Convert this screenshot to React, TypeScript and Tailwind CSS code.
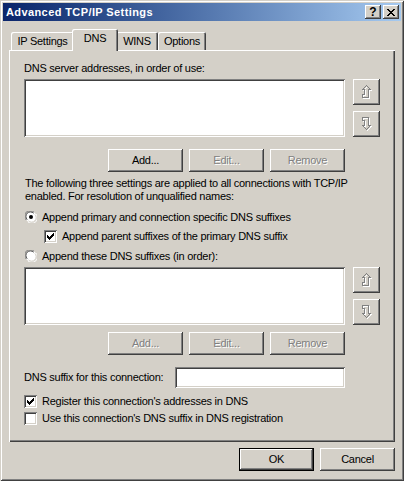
import type { ReactNode } from 'react'

const FONT = "font-['Liberation_Sans',Arial,sans-serif]"

function Btn({ label, disabled, isDefault, w = 'w-[75px]' }: { label: string; disabled?: boolean; isDefault?: boolean; w?: string }) {
  return (
    <div
      className={`${w} h-[23px] flex items-center justify-center bg-[#d4d0c8] ${
        isDefault
          ? 'shadow-[inset_0_0_0_1px_#000,inset_-2px_-2px_0_#404040,inset_2px_2px_0_#fff,inset_-3px_-3px_0_#808080]'
          : 'shadow-[inset_-1px_-1px_0_#404040,inset_1px_1px_0_#fff,inset_-2px_-2px_0_#808080,inset_2px_2px_0_#d4d0c8]'
      } ${disabled ? 'text-[#808080] [text-shadow:1px_1px_0_#fff]' : 'text-black'}`}
    >
      {label}
    </div>
  )
}

function ArrowBtn({ down }: { down?: boolean }) {
  const up = '5.5,0.5 9.5,4.5 7.5,4.5 7.5,12.5 1.5,12.5 1.5,9.5 3.5,9.5 3.5,4.5 1.5,4.5'
  const dn = '1.5,0.5 7.5,0.5 7.5,8.5 9.5,8.5 5.5,12.5 1.5,8.5 3.5,8.5 3.5,3.5 1.5,3.5'
  const pts = down ? dn : up
  return (
    <div className="w-[27px] h-[26px] flex items-center justify-center bg-[#d4d0c8] shadow-[inset_-1px_-1px_0_#404040,inset_1px_1px_0_#fff,inset_-2px_-2px_0_#808080,inset_2px_2px_0_#d4d0c8]">
      <svg width="12" height="14" viewBox="0 0 12 14" shapeRendering="crispEdges">
        <polygon points={pts} transform="translate(1,1)" fill="none" stroke="#fff" strokeWidth="1" />
        <polygon points={pts} fill="none" stroke="#808080" strokeWidth="1" />
      </svg>
    </div>
  )
}

function ListBox() {
  return (
    <div className="flex gap-[8px]">
      <div className="w-[321px] h-[58px] bg-white shadow-[inset_1px_1px_0_#808080,inset_-1px_-1px_0_#fff,inset_2px_2px_0_#404040,inset_-2px_-2px_0_#d4d0c8]" />
      <div className="flex flex-col gap-[6px]">
        <ArrowBtn />
        <ArrowBtn down />
      </div>
    </div>
  )
}

function Check({ checked }: { checked?: boolean }) {
  return (
    <div className="w-[13px] h-[13px] shrink-0 bg-white flex items-center justify-center shadow-[inset_1px_1px_0_#808080,inset_-1px_-1px_0_#fff,inset_2px_2px_0_#404040,inset_-2px_-2px_0_#d4d0c8]">
      {checked && (
        <svg width="7" height="7" viewBox="0 0 7 7" shapeRendering="crispEdges">
          <path d="M6 0h1v3h-1v1h-1v1h-1v1h-1v1h-1v-1h-1v-1h-1v-3h1v1h1v1h1v-1h1v-1h1z" fill="#000" />
        </svg>
      )}
    </div>
  )
}

function Radio({ checked }: { checked?: boolean }) {
  return (
    <svg width="12" height="12" viewBox="0 0 12 12" className="shrink-0">
      <circle cx="6" cy="6" r="5.5" fill="#fff" />
      <path d="M1.2 9 A5.3 5.3 0 0 1 9 1.2" fill="none" stroke="#808080" strokeWidth="1" />
      <path d="M2.2 8.6 A4.3 4.3 0 0 1 8.6 2.2" fill="none" stroke="#404040" strokeWidth="1" />
      <path d="M10.8 3 A5.3 5.3 0 0 1 3 10.8" fill="none" stroke="#fff" strokeWidth="1" />
      <path d="M9.8 3.4 A4.3 4.3 0 0 1 3.4 9.8" fill="none" stroke="#d4d0c8" strokeWidth="1" />
      {checked && <circle cx="6" cy="6" r="2" fill="#000" />}
    </svg>
  )
}

function Row({ children, className = '' }: { children: ReactNode; className?: string }) {
  return <div className={`h-[16px] flex items-center gap-[5px] ${className}`}>{children}</div>
}

export default function App() {
  return (
    <div className={`w-[404px] h-[481px] bg-[#d4d0c8] p-[3px] flex flex-col text-[11px] leading-[13px] tracking-[-0.25px] text-black ${FONT} shadow-[inset_1px_1px_0_#d4d0c8,inset_-1px_-1px_0_#404040,inset_2px_2px_0_#fff,inset_-2px_-2px_0_#808080]`}>
      <div className="h-[18px] flex items-center bg-linear-to-r from-[#0a246a] to-[#a6caf0] pl-[3px] pr-[2px]">
        <span className="flex-1 text-white font-bold text-[11px] tracking-[0.4px]">Advanced TCP/IP Settings</span>
        <div className="w-[16px] h-[14px] flex items-center justify-center bg-[#d4d0c8] font-bold text-[12px] tracking-normal shadow-[inset_-1px_-1px_0_#404040,inset_1px_1px_0_#fff,inset_-2px_-2px_0_#808080,inset_2px_2px_0_#d4d0c8]">
          ?
        </div>
        <div className="ml-[2px] w-[16px] h-[14px] flex items-center justify-center bg-[#d4d0c8] shadow-[inset_-1px_-1px_0_#404040,inset_1px_1px_0_#fff,inset_-2px_-2px_0_#808080,inset_2px_2px_0_#d4d0c8]">
          <svg width="8" height="7" viewBox="0 0 8 7" shapeRendering="crispEdges">
            <path d="M0 0h2v1h1v1h2v-1h1v-1h2v1h-1v1h-1v1h-1v1h1v1h1v1h1v1h-2v-1h-1v-1h-2v1h-1v1h-2v-1h1v-1h1v-1h1v-1h-1v-1h-1v-1h-1z" fill="#000" />
          </svg>
        </div>
      </div>

      <div className="flex-1 flex flex-col px-[6px] pt-[8px]">
        <div className="flex items-end h-[21px] pl-[2px]">
          <div className="w-[63px] h-[18px] flex items-center justify-center rounded-t-[2px] shadow-[inset_1px_1px_0_#fff,inset_-1px_0_0_#404040,inset_-2px_0_0_#808080]">
            IP Settings
          </div>
          <div className="relative z-10 -mx-[2px] mb-[-1px] w-[46px] h-[22px] pb-[3px] flex items-center justify-center bg-[#d4d0c8] rounded-t-[2px] shadow-[inset_1px_1px_0_#fff,inset_-1px_0_0_#404040,inset_-2px_0_0_#808080]">
            DNS
          </div>
          <div className="w-[42px] h-[18px] flex items-center justify-center rounded-t-[2px] shadow-[inset_1px_1px_0_#fff,inset_-1px_0_0_#404040,inset_-2px_0_0_#808080]">
            WINS
          </div>
          <div className="w-[48px] h-[18px] flex items-center justify-center rounded-t-[2px] shadow-[inset_1px_1px_0_#fff,inset_-1px_0_0_#404040,inset_-2px_0_0_#808080]">
            Options
          </div>
        </div>

        <div className="h-[392px] pt-[12px] pl-[15px] shadow-[inset_1px_1px_0_#fff,inset_-1px_-1px_0_#404040,inset_-2px_-2px_0_#808080]">
          <div>DNS server addresses, in order of use:</div>
          <div className="mt-[4px]">
            <ListBox />
          </div>
          <div className="flex gap-[6px] pl-[84px] mt-[12px]">
            <Btn label="Add..." />
            <Btn label="Edit..." disabled />
            <Btn label="Remove" disabled />
          </div>

          <p className="mt-[5px] pl-[1px]">
            The following three settings are applied to all connections with TCP/IP
            <br />
            enabled. For resolution of unqualified names:
          </p>
          <Row className="mt-[6px] pl-[1px]">
            <Radio checked />
            <span>Append primary and connection specific DNS suffixes</span>
          </Row>
          <Row className="mt-[3px] pl-[20px]">
            <Check checked />
            <span>Append parent suffixes of the primary DNS suffix</span>
          </Row>
          <Row className="mt-[4px] pl-[1px]">
            <Radio />
            <span>Append these DNS suffixes (in order):</span>
          </Row>
          <div className="mt-[3px]">
            <ListBox />
          </div>
          <div className="flex gap-[6px] pl-[84px] mt-[7px]">
            <Btn label="Add..." disabled />
            <Btn label="Edit..." disabled />
            <Btn label="Remove" disabled />
          </div>

          <div className="mt-[12px] flex items-center">
            <span className="w-[151px]">DNS suffix for this connection:</span>
            <div className="w-[170px] h-[21px] bg-white shadow-[inset_1px_1px_0_#808080,inset_-1px_-1px_0_#fff,inset_2px_2px_0_#404040,inset_-2px_-2px_0_#d4d0c8]" />
          </div>
          <Row className="mt-[5px]">
            <Check checked />
            <span>Register this connection's addresses in DNS</span>
          </Row>
          <Row className="mt-[1px]">
            <Check />
            <span>Use this connection's DNS suffix in DNS registration</span>
          </Row>
        </div>

        <div className="mt-[6px] flex justify-end gap-[6px]">
          <Btn label="OK" isDefault />
          <Btn label="Cancel" />
        </div>
      </div>
    </div>
  )
}
